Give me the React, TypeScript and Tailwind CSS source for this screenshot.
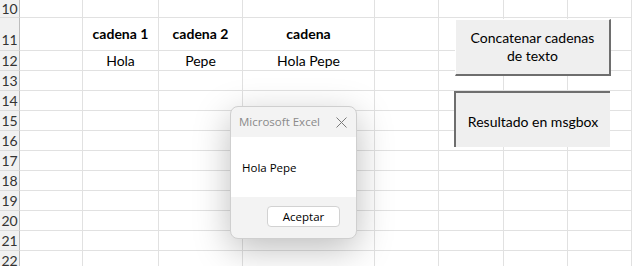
const rowNums = [10, 11, 12, 13, 14, 15, 16, 17, 18, 19, 20, 21, 22];

const cellData: Record<number, string[]> = {
  11: ["", "cadena 1", "cadena 2", "cadena", "", "", "", ""],
  12: ["", "Hola", "Pepe", "Hola Pepe", "", "", "", ""],
};

const App = () => {
  return (
    <div
      className="relative w-[632px] h-[266px] overflow-hidden bg-white text-[14px] text-black"
      style={{ fontFamily: "Lato, 'Open Sans', sans-serif" }}
    >
      <div className="grid grid-cols-[20px_63px_76px_84px_132px_64px_65px_64px_64px] grid-rows-[18px_33px_repeat(11,20px)]">
        {rowNums.map((n) => {
          const data = cellData[n] ?? ["", "", "", "", "", "", "", ""];
          return (
            <div key={n} className="contents">
              <div
                className={`flex ${n === 11 ? "items-end pb-[3px]" : "items-center"} justify-center bg-[#f1f1f1] border-r border-r-[#bdbdbd] border-b border-b-[#dcdcdc] text-[#333] text-[14px] leading-none`}
              >
                {n}
              </div>
              {data.map((t, i) => (
                <div
                  key={i}
                  className={`flex items-center justify-center border-r border-b border-[#e1e1e1] leading-none ${n === 11 ? "font-bold" : ""}`}
                >
                  {t}
                </div>
              ))}
            </div>
          );
        })}
      </div>

      {/* form buttons */}
      <div className="absolute left-[455px] top-[19px] w-[156px] h-[57px] flex items-center justify-center text-center bg-[#efefef] border-t border-l border-white border-r-2 border-b-2 border-r-[#6e6e6e] border-b-[#6e6e6e] leading-[18px]">
        Concatenar cadenas
        <br />
        de texto
      </div>
      <div className="absolute left-[454px] top-[91px] w-[156px] h-[56px] flex items-center justify-center text-center bg-[#efefef] border-t-2 border-l-2 border-[#6e6e6e] pt-[2px]">
        Resultado en msgbox
      </div>

      {/* msgbox */}
      <div
        className="absolute left-[230px] top-[106px] w-[127px] h-[133px] flex flex-col rounded-[8px] border border-[#cfcfcf] bg-[#f3f3f3] overflow-hidden shadow-[0_10px_36px_rgba(0,0,0,0.26)]"
        style={{ fontFamily: "'Open Sans', 'Noto Sans', sans-serif" }}
      >
        <div className="h-[30px] flex items-center justify-between pl-[8px] pr-[9px] text-[11.5px] text-[#8a8a8a]">
          <span>Microsoft Excel</span>
          <svg width="11" height="11" viewBox="0 0 11 11" className="text-[#7a7a7a]">
            <path d="M0.5 0.5 L10.5 10.5 M10.5 0.5 L0.5 10.5" stroke="currentColor" strokeWidth="1" />
          </svg>
        </div>
        <div className="h-[60px] bg-white flex items-center pl-[11px] pt-[1px] text-[11.5px]">Hola Pepe</div>
        <div className="flex-1 flex items-start justify-end pt-[9px] pr-[16px]">
          <div className="w-[73px] h-[21px] flex items-center justify-center rounded-[4px] border border-[#d2d2d2] bg-white text-[11.5px]">
            Aceptar
          </div>
        </div>
      </div>
    </div>
  );
};

export default App;
